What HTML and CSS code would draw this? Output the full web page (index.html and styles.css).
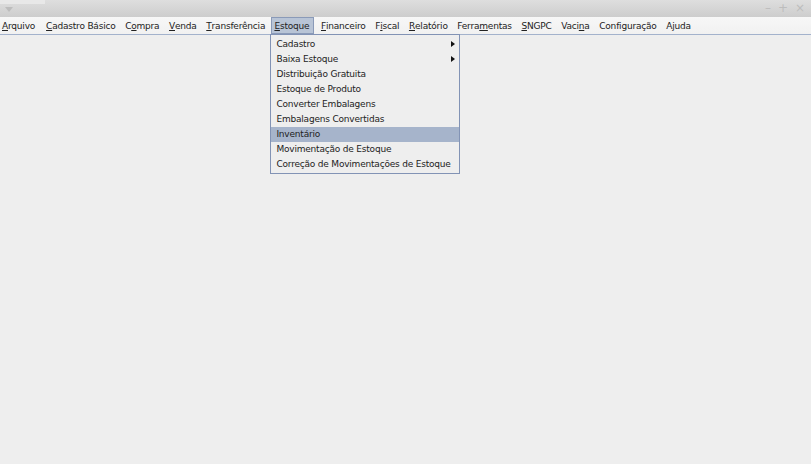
FILE: index.html
```html
<!DOCTYPE html>
<html lang="pt">
<head>
<meta charset="utf-8">
<title>Sistema</title>
<link rel="stylesheet" href="styles.css">
</head>
<body>
<div class="window">
  <div class="titlebar">
    <div class="tab"></div>
    <svg class="tri" width="8" height="5" viewBox="0 0 8 5"><path d="M0 0 L8 0 L4 5 Z" fill="#bcbcbc"/></svg>
    <div class="controls">
      <span class="ctl">&#8211;</span>
      <span class="ctl">+</span>
      <span class="ctl">&#215;</span>
    </div>
  </div>
  <nav class="menubar">
    <span class="mi first"><u>A</u>rquivo</span>
    <span class="mi"><u>C</u>adastro Básico</span>
    <span class="mi">C<u>o</u>mpra</span>
    <span class="mi"><u>V</u>enda</span>
    <span class="mi"><u>T</u>ransferência</span>
    <span class="mi open"><u>E</u>stoque
      <div class="dropdown">
        <div class="row">Cadastro<span class="arrow"></span></div>
        <div class="row">Baixa Estoque<span class="arrow"></span></div>
        <div class="row">Distribuição Gratuita</div>
        <div class="row">Estoque de Produto</div>
        <div class="row">Converter Embalagens</div>
        <div class="row">Embalagens Convertidas</div>
        <div class="row sel">Inventário</div>
        <div class="row">Movimentação de Estoque</div>
        <div class="row">Correção de Movimentações de Estoque</div>
      </div>
    </span>
    <span class="mi"><u>F</u>inanceiro</span>
    <span class="mi">F<u>i</u>scal</span>
    <span class="mi"><u>R</u>elatório</span>
    <span class="mi">Ferra<u>m</u>entas</span>
    <span class="mi"><u>S</u>NGPC</span>
    <span class="mi">Vaci<u>n</u>a</span>
    <span class="mi">Confi<u>g</u>uração</span>
    <span class="mi">A<u>j</u>uda</span>
  </nav>
  <main class="desktop"></main>
</div>
</body>
</html>
```
FILE: styles.css
```css
html, body {
  margin: 0;
  padding: 0;
  background: #eeeeee;
}
body {
  font-family: "DejaVu Sans", "Liberation Sans", sans-serif;
  font-size: 9px;
  color: #222;
}
.window {
  width: 811px;
  height: 464px;
  display: flex;
  flex-direction: column;
  overflow: hidden;
}
.titlebar {
  position: relative;
  height: 17px;
  flex: none;
  background: linear-gradient(#dedede, #cdcdcd);
}
.tab {
  position: absolute;
  left: 0;
  top: 0;
  width: 45px;
  height: 4px;
  background: #e8e8e8;
}
.tri {
  position: absolute;
  left: 5px;
  top: 7px;
}
.controls {
  position: absolute;
  right: 6px;
  top: 1px;
  display: flex;
  gap: 7px;
  color: #bdbdbd;
  font-size: 12px;
}
.menubar {
  height: 17px;
  flex: none;
  display: flex;
  align-items: stretch;
  background: linear-gradient(#f7f7f7, #f1f1f1);
  border-bottom: 1px solid #a3b2cc;
  box-shadow: 0 1px 0 #dfe3ea;
}
.mi {
  position: relative;
  display: flex;
  align-items: center;
  padding: 0 3px 0 2px;
  margin-right: 4.6px;
  white-space: nowrap;
  letter-spacing: -0.2px;
}
.mi.first {
  margin-right: 6px;
}
.mi u {
  text-decoration: underline;
  text-underline-offset: 1px;
}
.mi.open {
  background: #b8c4d6;
  outline: 1px solid #8a9ab8;
  outline-offset: -1px;
  margin-left: -1.4px;
  padding: 0 5px 0 3px;
}
.dropdown {
  position: absolute;
  left: -1px;
  top: 17px;
  width: 188px;
  padding: 2px 0 1px;
  background: #eeeeee;
  border: 1px solid #8293b5;
  z-index: 5;
}
.row {
  position: relative;
  height: 15px;
  line-height: 15px;
  padding-left: 5px;
}
.row.sel {
  background: #a6b4cb;
}
.arrow {
  position: absolute;
  right: 4px;
  top: 4px;
  width: 0;
  height: 0;
  border-top: 3.5px solid transparent;
  border-bottom: 3.5px solid transparent;
  border-left: 4px solid #111;
}
.desktop {
  flex: 1;
  background: #eeeeee;
}
```
